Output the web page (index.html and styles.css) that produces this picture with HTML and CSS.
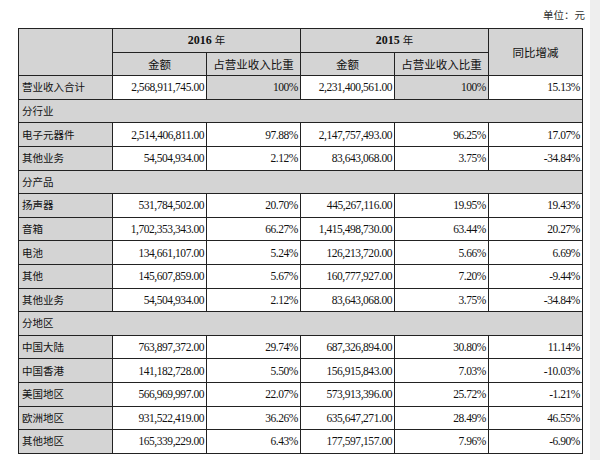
FILE: index.html
```html
<!DOCTYPE html>
<html lang="zh">
<head>
<meta charset="utf-8">
<title>营业收入构成</title>
<link rel="stylesheet" href="styles.css">
</head>
<body>
<div class="page">
  <main class="main">
    <div class="unit">单位：元</div>
    <table class="report">
      <colgroup>
        <col class="c"><col class="c"><col class="c"><col class="c"><col class="c"><col class="c">
      </colgroup>
      <thead>
        <tr>
          <th rowspan="2" class="g"></th>
          <th colspan="2" class="g year">2016 <span class="cn">年</span></th>
          <th colspan="2" class="g year">2015 <span class="cn">年</span></th>
          <th rowspan="2" class="g cn">同比增减</th>
        </tr>
        <tr>
          <th class="g cn">金额</th>
          <th class="g cn">占营业收入比重</th>
          <th class="g cn">金额</th>
          <th class="g cn">占营业收入比重</th>
        </tr>
      </thead>
      <tbody>
        <tr><td class="g lbl">营业收入合计</td><td class="n">2,568,911,745.00</td><td class="n g">100%</td><td class="n">2,231,400,561.00</td><td class="n g">100%</td><td class="n">15.13%</td></tr>
        <tr><td class="g lbl" colspan="6">分行业</td></tr>
        <tr><td class="g lbl">电子元器件</td><td class="n">2,514,406,811.00</td><td class="n">97.88%</td><td class="n">2,147,757,493.00</td><td class="n">96.25%</td><td class="n">17.07%</td></tr>
        <tr><td class="g lbl">其他业务</td><td class="n">54,504,934.00</td><td class="n">2.12%</td><td class="n">83,643,068.00</td><td class="n">3.75%</td><td class="n">-34.84%</td></tr>
        <tr><td class="g lbl" colspan="6">分产品</td></tr>
        <tr><td class="g lbl">扬声器</td><td class="n">531,784,502.00</td><td class="n">20.70%</td><td class="n">445,267,116.00</td><td class="n">19.95%</td><td class="n">19.43%</td></tr>
        <tr><td class="g lbl">音箱</td><td class="n">1,702,353,343.00</td><td class="n">66.27%</td><td class="n">1,415,498,730.00</td><td class="n">63.44%</td><td class="n">20.27%</td></tr>
        <tr><td class="g lbl">电池</td><td class="n">134,661,107.00</td><td class="n">5.24%</td><td class="n">126,213,720.00</td><td class="n">5.66%</td><td class="n">6.69%</td></tr>
        <tr><td class="g lbl">其他</td><td class="n">145,607,859.00</td><td class="n">5.67%</td><td class="n">160,777,927.00</td><td class="n">7.20%</td><td class="n">-9.44%</td></tr>
        <tr><td class="g lbl">其他业务</td><td class="n">54,504,934.00</td><td class="n">2.12%</td><td class="n">83,643,068.00</td><td class="n">3.75%</td><td class="n">-34.84%</td></tr>
        <tr><td class="g lbl" colspan="6">分地区</td></tr>
        <tr><td class="g lbl">中国大陆</td><td class="n">763,897,372.00</td><td class="n">29.74%</td><td class="n">687,326,894.00</td><td class="n">30.80%</td><td class="n">11.14%</td></tr>
        <tr><td class="g lbl">中国香港</td><td class="n">141,182,728.00</td><td class="n">5.50%</td><td class="n">156,915,843.00</td><td class="n">7.03%</td><td class="n">-10.03%</td></tr>
        <tr><td class="g lbl">美国地区</td><td class="n">566,969,997.00</td><td class="n">22.07%</td><td class="n">573,913,396.00</td><td class="n">25.72%</td><td class="n">-1.21%</td></tr>
        <tr><td class="g lbl">欧洲地区</td><td class="n">931,522,419.00</td><td class="n">36.26%</td><td class="n">635,647,271.00</td><td class="n">28.49%</td><td class="n">46.55%</td></tr>
        <tr><td class="g lbl">其他地区</td><td class="n">165,339,229.00</td><td class="n">6.43%</td><td class="n">177,597,157.00</td><td class="n">7.96%</td><td class="n">-6.90%</td></tr>
      </tbody>
    </table>
  </main>
  <aside class="strip"></aside>
</div>
</body>
</html>
```

FILE: styles.css
```css
html, body {
  margin: 0;
  padding: 0;
  background: #ffffff;
}

.page {
  display: flex;
  width: 600px;
  height: 460px;
  overflow: hidden;
}

.main {
  flex: 1;
  padding-left: 18px;
  font-family: "Liberation Serif", "Noto Sans CJK SC", serif;
  color: #111;
}

.strip {
  width: 10px;
  background: #eeeeee;
}

.unit {
  height: 28px;
  box-sizing: border-box;
  padding-top: 7px;
  padding-right: 5px;
  text-align: right;
  font-family: "Noto Sans CJK SC", sans-serif;
  font-size: 10.5px;
  line-height: 16px;
  color: #333;
}

.report {
  border-collapse: collapse;
  table-layout: fixed;
  width: 565px;
}

.report .c {
  width: 94px;
}

.report th,
.report td {
  border: 1.5px solid #222;
  height: 23.6px;
  padding: 0 2px;
  box-sizing: border-box;
  font-size: 11.5px;
  line-height: 14px;
  white-space: nowrap;
  overflow: hidden;
}

.report th {
  font-weight: normal;
  text-align: center;
}

.report .year {
  font-weight: bold;
  font-size: 12px;
}

.report .year .cn {
  font-weight: normal;
}

.cn {
  font-family: "Noto Sans CJK SC", sans-serif;
  font-size: 10.5px;
}

.report .g {
  background: #d4d4d4;
}

.report .lbl {
  text-align: left;
  font-family: "Noto Sans CJK SC", sans-serif;
  font-size: 10.5px;
  padding-left: 3px;
}

.report .n {
  text-align: right;
  letter-spacing: -0.45px;
  padding-right: 2px;
}
```
